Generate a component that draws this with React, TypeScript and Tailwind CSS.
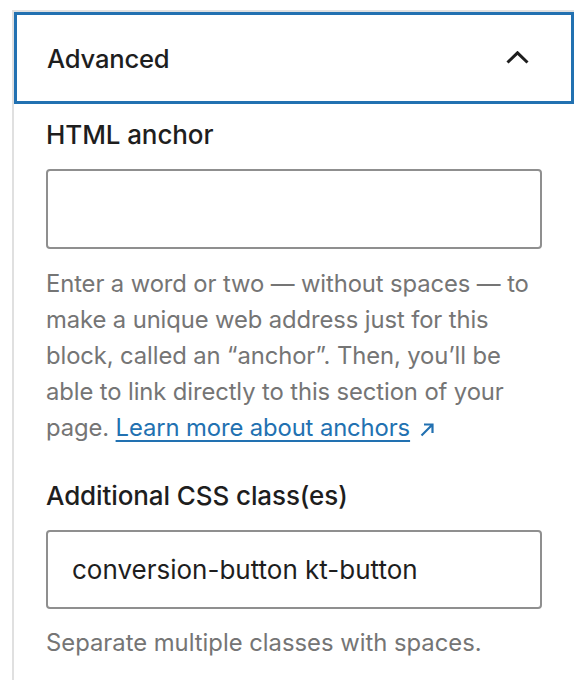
import React from "react";

const font = { fontFamily: 'Inter, "Noto Sans", "Liberation Sans", sans-serif' };

export default function App() {
  return (
    <div className="w-[574px] h-[680px] bg-white pt-[10px] pl-[12px] overflow-hidden" style={font}>
      <div className="h-full border-l-2 border-t-2 border-[#e0e0e0] flex flex-col">
        <button className="w-full h-[92px] shrink-0 flex items-center justify-between pl-[33px] pr-[45px] shadow-[inset_0_0_0_3px_#2271b1] text-left">
          <span className="text-[25.6px] font-medium text-[#1e1e1e] tracking-[-0.2px] mt-[2px]">Advanced</span>
          <svg width="23" height="13" viewBox="0 0 23 13" fill="none" className="mt-[-2px]">
            <polyline points="1.5,11.5 11.5,1.8 21.5,11.5" stroke="#1e1e1e" strokeWidth="3" />
          </svg>
        </button>
        <div className="flex flex-col pl-[32px] pr-[32px] pt-[15px]">
          <label className="text-[26px] leading-[32px] font-medium text-[#1e1e1e] tracking-[-0.1px]">HTML anchor</label>
          <input
            type="text"
            className="mt-[18px] h-[80px] w-full rounded-[4px] border-2 border-[#8f8f8f] px-[24px] text-[26px] text-[#1e1e1e] outline-none"
          />
          <p className="mt-[17px] text-[23.8px] leading-[36px] text-[#757575] tracking-[-0.1px]">
            Enter a word or two — without spaces — to
            <br />
            make a unique web address just for this
            <br />
            block, called an “anchor”. Then, you’ll be
            <br />
            able to link directly to this section of your
            <br />
            page.{" "}
            <a className="text-[#2271b1] underline underline-offset-[4px] decoration-[2px]">Learn more about anchors</a>
            <svg width="14" height="14" viewBox="0 0 14 14" fill="none" className="inline-block ml-[10px] align-[-1px]">
              <path d="M1.5 12.5 L12 2 M4 1.5 H12.5 V10" stroke="#2271b1" strokeWidth="2.2" />
            </svg>
          </p>
          <label className="mt-[34px] text-[26px] leading-[32px] font-medium text-[#1e1e1e] tracking-[-0.1px]">
            Additional CSS class(es)
          </label>
          <input
            type="text"
            defaultValue="conversion-button kt-button"
            className="mt-[18px] h-[79px] w-full rounded-[4px] border-2 border-[#8f8f8f] px-[24px] text-[26px] text-[#1e1e1e] outline-none"
            style={font}
          />
          <p className="mt-[16px] text-[23.8px] leading-[36px] text-[#757575]">
            Separate multiple classes with spaces.
          </p>
        </div>
      </div>
    </div>
  );
}
